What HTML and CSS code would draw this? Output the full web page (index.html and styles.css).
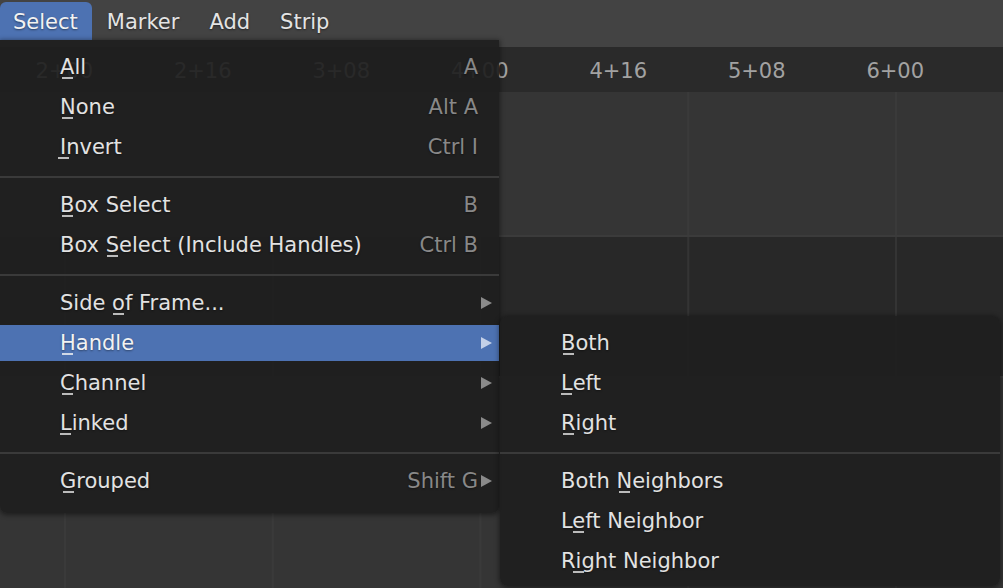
FILE: index.html
```html
<!DOCTYPE html>
<html>
<head>
<meta charset="utf-8">
<link rel="stylesheet" href="styles.css">
</head>
<body>
<div class="app">
  <header class="topbar">
    <div class="tab active">Select</div>
    <div class="tab">Marker</div>
    <div class="tab">Add</div>
    <div class="tab">Strip</div>
  </header>
  <div class="ruler">
    <span>2+00</span><span>2+16</span><span>3+08</span><span>4+00</span><span>4+16</span><span>5+08</span><span>6+00</span>
  </div>
  <div class="tracks">
    <div class="track light"></div>
    <div class="track dark"></div>
    <div class="track light fill"></div>
  </div>

  <div class="menu main">
    <div class="item"><span class="label"><span class="u">A</span>ll</span><span class="key">A</span><span class="slot"></span></div>
    <div class="item"><span class="label"><span class="u">N</span>one</span><span class="key">Alt A</span><span class="slot"></span></div>
    <div class="item"><span class="label"><span class="u">I</span>nvert</span><span class="key">Ctrl I</span><span class="slot"></span></div>
    <div class="sep"></div>
    <div class="item"><span class="label"><span class="u">B</span>ox Select</span><span class="key">B</span><span class="slot"></span></div>
    <div class="item"><span class="label">Box <span class="u">S</span>elect (Include Handles)</span><span class="key">Ctrl B</span><span class="slot"></span></div>
    <div class="sep"></div>
    <div class="item"><span class="label">Side <span class="u">o</span>f Frame...</span><span class="slot"><svg class="tri" width="11" height="12" viewBox="0 0 11 12"><path d="M0 0L11 6L0 12Z"/></svg></span></div>
    <div class="item active"><span class="label"><span class="u">H</span>andle</span><span class="slot"><svg class="tri" width="11" height="12" viewBox="0 0 11 12"><path d="M0 0L11 6L0 12Z"/></svg></span></div>
    <div class="item"><span class="label"><span class="u">C</span>hannel</span><span class="slot"><svg class="tri" width="11" height="12" viewBox="0 0 11 12"><path d="M0 0L11 6L0 12Z"/></svg></span></div>
    <div class="item"><span class="label"><span class="u">L</span>inked</span><span class="slot"><svg class="tri" width="11" height="12" viewBox="0 0 11 12"><path d="M0 0L11 6L0 12Z"/></svg></span></div>
    <div class="sep"></div>
    <div class="item"><span class="label"><span class="u">G</span>rouped</span><span class="key">Shift G</span><span class="slot"><svg class="tri" width="11" height="12" viewBox="0 0 11 12"><path d="M0 0L11 6L0 12Z"/></svg></span></div>
  </div>

  <div class="menu sub">
    <div class="item"><span class="label"><span class="u">B</span>oth</span></div>
    <div class="item"><span class="label"><span class="u">L</span>eft</span></div>
    <div class="item"><span class="label"><span class="u">R</span>ight</span></div>
    <div class="sep"></div>
    <div class="item"><span class="label">Both <span class="u">N</span>eighbors</span></div>
    <div class="item"><span class="label">L<span class="u">e</span>ft Neighbor</span></div>
    <div class="item"><span class="label">R<span class="u">i</span>ght Neighbor</span></div>
  </div>
</div>
</body>
</html>
```

FILE: styles.css
```css
html, body {
  margin: 0;
  padding: 0;
  background: #282828;
}
body {
  font-family: "DejaVu Sans", sans-serif;
  font-size: 21px;
  color: #e2e2e2;
}
.app {
  position: relative;
  width: 1003px;
  height: 588px;
  overflow: hidden;
  display: flex;
  flex-direction: column;
}
.topbar {
  height: 47px;
  flex: none;
  background: #434343;
  display: flex;
  align-items: flex-start;
  padding-top: 2px;
  box-sizing: border-box;
}
.tab {
  height: 38px;
  line-height: 40px;
  padding: 0 15px;
  color: #e4e4e4;
  text-shadow: 0 1px 2px rgba(0,0,0,0.45);
}
.tab.active {
  background: #4d72b2;
  border-radius: 6px 6px 0 0;
  padding: 0 14px 0 13px;
  color: #f2f2f2;
}
.ruler {
  height: 45px;
  flex: none;
  background: #2a2a2a;
  display: grid;
  grid-template-columns: repeat(7, 138.5px);
  padding-left: 0;
  margin-left: -5px;
  width: 1008px;
  overflow: hidden;
}
.ruler span {
  text-align: center;
  line-height: 48px;
  height: 45px;
  color: #a2a2a2;
}
.tracks {
  flex: 1;
  display: flex;
  flex-direction: column;
}
.track {
  height: 143px;
  flex: none;
  background-size: 207.75px 100%;
  background-position: 64px 0;
  background-repeat: repeat-x;
}
.track.light {
  background-color: #353535;
  background-image: linear-gradient(90deg, #3a3a3a 0, #3a3a3a 2px, transparent 2px);
}
.track.dark {
  background-color: #282828;
  border-top: 2px solid #3b3b3b;
  border-bottom: 2px solid #3b3b3b;
  height: 139px;
  background-image: linear-gradient(90deg, #343434 0, #343434 2px, transparent 2px);
}
.track.fill {
  flex: 1;
}

.menu {
  position: absolute;
  display: flex;
  flex-direction: column;
  background: rgba(30, 30, 30, 0.92);
  box-shadow: 0 1px 5px 1px rgba(0, 0, 0, 0.45);
  box-sizing: border-box;
}
.menu.main {
  left: 0;
  top: 40px;
  width: 499px;
  padding: 7px 0 12px;
  border-radius: 0 0 7px 7px;
}
.menu.sub {
  left: 500px;
  top: 316px;
  width: 500px;
  padding: 7px 0 5px;
  border-radius: 8px;
}
.item {
  height: 36px;
  margin: 2px 0;
  display: flex;
  align-items: center;
  padding-left: 60px;
  line-height: 38px;
  white-space: nowrap;
  text-shadow: 0 1px 2px rgba(0,0,0,0.4);
}
.menu.sub .item {
  padding-left: 61px;
}
.item.active {
  background: #4d72b2;
  color: #f2f2f2;
}
.label {
  flex: 1;
}
.key {
  color: #888888;
}
.slot {
  width: 21px;
  flex: none;
  display: flex;
  align-items: center;
  padding-left: 3px;
  box-sizing: border-box;
  color: #8a8a8a;
}
.item.active .slot {
  color: #c3d0e8;
}
.tri {
  display: block;
  fill: currentColor;
}
.sep {
  height: 2px;
  margin: 9px 0 7px;
  background: #3a3a3a;
  flex: none;
}
.u {
  position: relative;
}
.u::after {
  content: "";
  position: absolute;
  left: 50%;
  margin-left: -5.5px;
  width: 11px;
  height: 2px;
  top: 22px;
  background: currentColor;
  opacity: 0.8;
}
```
